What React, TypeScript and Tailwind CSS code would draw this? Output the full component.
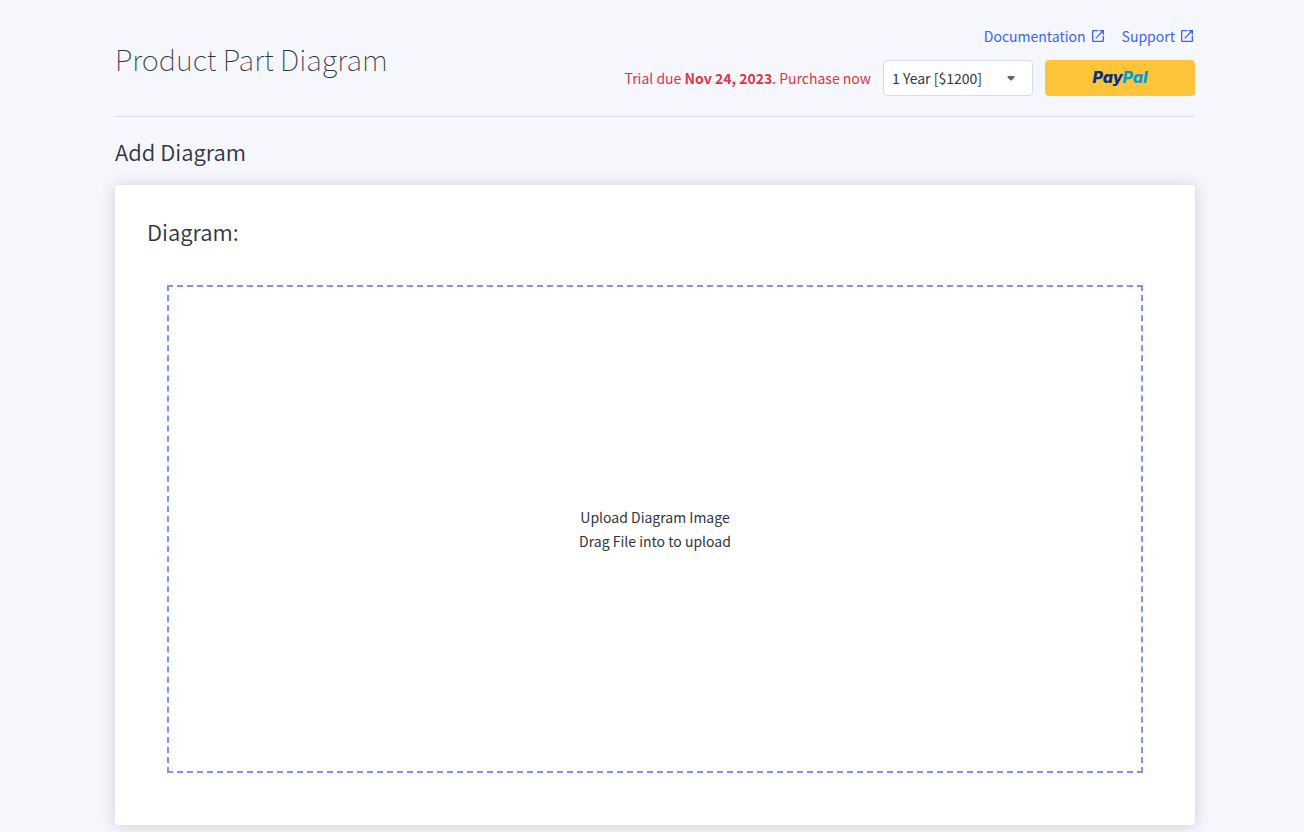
import { useState } from "react";

type ExternalLinkProps = {
  caption: string;
  href: string;
};

const plans = [
  { value: "1y", caption: "1 Year [$1200]" },
  { value: "2y", caption: "2 Years [$2200]" },
];

const OpenInNewIcon = () => (
  <svg
    aria-hidden="true"
    className="h-4 w-4"
    fill="currentColor"
    viewBox="0 0 24 24"
  >
    <path d="M19 19H5V5h7V3H5a2 2 0 0 0-2 2v14a2 2 0 0 0 2 2h14c1.1 0 2-.9 2-2v-7h-2v7zM14 3v2h3.59l-9.83 9.83 1.41 1.41L19 6.41V10h2V3h-7z" />
  </svg>
);

const ArrowDownIcon = () => (
  <svg
    aria-hidden="true"
    className="pointer-events-none absolute top-1.5 right-2.5 h-6 w-6 text-[#5E637A]"
    fill="currentColor"
    viewBox="0 0 24 24"
  >
    <path d="M8.71 11.71l2.59 2.59c.39.39 1.02.39 1.41 0l2.59-2.59c.63-.63.18-1.71-.71-1.71H9.41c-.89 0-1.33 1.08-.7 1.71z" />
  </svg>
);

const ExternalLink = ({ caption, href }: ExternalLinkProps) => (
  <a className="flex items-center gap-1 text-[#3C64F4]" href={href}>
    {caption}
    <OpenInNewIcon />
  </a>
);

const PayPalButton = () => (
  <button
    type="button"
    aria-label="PayPal"
    className="flex h-9 w-[150px] cursor-pointer items-center justify-center rounded bg-[#FFC439] pb-0.5 font-['Inter',sans-serif] text-[16px] leading-5 font-extrabold italic [font-feature-settings:'cv11']"
  >
    <span className="text-[#003087]">Pay</span>
    <span className="text-[#009CDE]">Pal</span>
  </button>
);

const Header = () => {
  const [plan, setPlan] = useState("1y");

  return (
    <header className="flex justify-between border-b border-[#D9DCE9] pb-5">
      <h1 className="pt-3.5 text-[29px] leading-10 font-thin">
        Product Part Diagram
      </h1>
      <div className="flex flex-col items-end gap-3">
        <nav className="flex gap-4">
          <ExternalLink caption="Documentation" href="#documentation" />
          <ExternalLink caption="Support" href="#support" />
        </nav>
        <div className="flex items-center gap-3">
          <label className="text-[#DB3643]" htmlFor="plan">
            Trial due <b className="font-bold">Nov 24, 2023</b>. Purchase now
          </label>
          <div className="relative">
            <select
              id="plan"
              className="h-9 w-[150px] appearance-none rounded border border-[#D9DCE9] bg-white px-2"
              value={plan}
              onChange={(e) => setPlan(e.target.value)}
            >
              {plans.map(({ value, caption }) => (
                <option key={value} value={value}>
                  {caption}
                </option>
              ))}
            </select>
            <ArrowDownIcon />
          </div>
          <PayPalButton />
        </div>
      </div>
    </header>
  );
};

const UploadArea = () => (
  <label className="m-5 flex h-[488px] cursor-pointer flex-col items-center justify-center border-2 border-dashed border-[#7995F7] text-center">
    <span>Upload Diagram Image</span>
    <span>Drag File into to upload</span>
    <input type="file" accept="image/*" className="sr-only" />
  </label>
);

const App = () => (
  <div className="min-h-screen bg-[#F6F7FC] pt-6 pr-[109px] pb-2 pl-[115px] font-['Noto_Sans_CJK_SC',sans-serif] text-[14px] leading-6 text-[#313440]">
    <Header />
    <main>
      <h2 className="py-5 text-[22px] leading-7 font-[350]">Add Diagram</h2>
      <section className="rounded bg-white p-8 shadow-[0_1px_16px_rgba(49,52,64,0.2)]">
        <h3 className="mb-10 text-[22px] leading-7 font-[350]">Diagram:</h3>
        <UploadArea />
      </section>
    </main>
  </div>
);

export default App;
